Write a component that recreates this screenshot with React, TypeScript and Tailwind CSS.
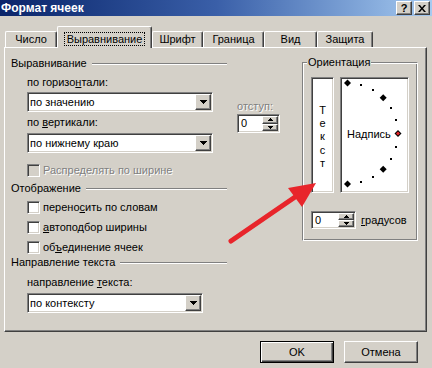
import type { ReactNode } from "react";

const RAISED =
  "border border-t-white border-l-white border-r-[#404040] border-b-[#404040] shadow-[inset_-1px_-1px_0_#808080]";
const SUNKEN =
  "border border-t-[#808080] border-l-[#808080] border-r-white border-b-white shadow-[inset_1px_1px_0_#404040,inset_-1px_-1px_0_#d4d0c8]";
const ETCHED =
  "border border-t-[#808080] border-l-[#808080] border-r-white border-b-white shadow-[inset_1px_1px_0_white,inset_-1px_-1px_0_#808080]";
const DISABLED = "text-[#808080] [text-shadow:1px_1px_0_#fff]";

const TABS = [
  { label: "Число", w: "w-[52px]" },
  { label: "Выравнивание", w: "w-[95px]", active: true },
  { label: "Шрифт", w: "w-[51px]" },
  { label: "Граница", w: "w-[61px]" },
  { label: "Вид", w: "w-[53px]" },
  { label: "Защита", w: "w-[56px]" },
];

export default function App() {
  return (
    <div className="relative w-[432px] h-[368px] overflow-hidden bg-[#d4d0c8] font-['Liberation_Sans',Arial,sans-serif] text-[11px] leading-[13px] text-black">
      <TitleBar />

      <div className="mt-[10px] h-[21px] pl-[5px] flex items-end">
        {TABS.map((t) =>
          t.active ? (
            <div
              key={t.label}
              className={`${t.w} relative z-10 -mb-[1px] h-[22px] bg-[#d4d0c8] border-t border-l border-t-white border-l-white border-r border-r-[#404040] shadow-[inset_-1px_0_0_#808080] rounded-t-[2px] flex justify-center pt-[5px]`}
            >
              <span className="h-[14px] px-[2px] border border-dotted border-black leading-[12px]">
                {t.label}
              </span>
            </div>
          ) : (
            <div
              key={t.label}
              className={`${t.w} mr-[0px] h-[16px] border-t border-l border-t-white border-l-white border-r border-r-[#404040] shadow-[inset_-1px_0_0_#808080] rounded-t-[2px] flex items-center justify-center`}
            >
              {t.label}
            </div>
          )
        )}
      </div>

      <div className="ml-[4px] w-[423px] h-[285px] border border-t-white border-l-white border-r-[#404040] border-b-[#404040] shadow-[inset_-1px_-1px_0_#808080] flex pl-[6px]">
        <LeftColumn />

        <div className="ml-[10px] w-[43px] pt-[52px] flex flex-col">
          <span className={DISABLED}>отступ:</span>
          <Spinner className="mt-[1px] w-[43px] h-[19px]" />
        </div>

        <Orientation />
      </div>

      <div className="mt-[9px] pr-[14px] flex justify-end gap-[10px]">
        <button
          type="button"
          className="w-[74px] h-[22px] bg-[#d4d0c8] border border-black shadow-[inset_1px_1px_0_white,inset_-1px_-1px_0_#404040,inset_-2px_-2px_0_#808080]"
        >
          OK
        </button>
        <button type="button" className={`${RAISED} w-[74px] h-[22px] bg-[#d4d0c8]`}>
          Отмена
        </button>
      </div>

      {/* red arrow drawn over the dialog */}
      <svg
        className="absolute left-0 top-0 pointer-events-none"
        width="432"
        height="368"
        viewBox="0 0 432 368"
      >
        <line x1="231" y1="241" x2="298" y2="195" stroke="#e8252b" strokeWidth="5" strokeLinecap="round" />
        <polygon points="316,183 288,188 302,207" fill="#e8252b" />
      </svg>
    </div>
  );
}

function TitleBar() {
  return (
    <div className="h-[16px] bg-linear-to-r from-[#0a246a] via-[#3a5fa8] to-[#a6caf0] flex items-center justify-between pr-[2px]">
      <span className="pl-[1px] text-white font-bold text-[12px]">Формат ячеек</span>
      <div className="flex gap-[2px]">
        <div className={`${RAISED} w-[16px] h-[14px] bg-[#d4d0c8] flex items-center justify-center font-bold text-[11px] leading-[10px]`}>
          ?
        </div>
        <div className={`${RAISED} w-[16px] h-[14px] bg-[#d4d0c8] flex items-center justify-center`}>
          <svg width="8" height="7" viewBox="0 0 8 7">
            <path d="M0 0h2l2 2.5L6 0h2L5 3.5 8 7H6L4 4.5 2 7H0l3-3.5z" fill="black" />
          </svg>
        </div>
      </div>
    </div>
  );
}

function LeftColumn() {
  return (
    <div className="w-[216px] pt-[9px] flex flex-col">
      <Heading title="Выравнивание" />
      <div className="pl-[16px] flex flex-col">
        <span className="mt-[6px]">
          по горизо<u>н</u>тали:
        </span>
        <Combo className="mt-[3px] w-[186px]" value="по значению" />
        <span className="mt-[4px]">
          по <u>в</u>ертикали:
        </span>
        <Combo className="mt-[4px] w-[186px]" value="по нижнему краю" />
        <Check className="mt-[11px]" disabled>
          Распределять по ширине
        </Check>
      </div>

      <div className="mt-[5px]">
        <Heading title="Отображение" />
      </div>
      <div className="pl-[16px] flex flex-col gap-[7px] mt-[6px]">
        <Check>
          перено<u>с</u>ить по словам
        </Check>
        <Check>
          <u>а</u>втоподбор ширины
        </Check>
        <Check>
          об<u>ъ</u>единение ячеек
        </Check>
      </div>

      <div className="mt-[2px]">
        <Heading title="Направление текста" />
      </div>
      <div className="pl-[16px] flex flex-col">
        <span className="mt-[7px]">
          направление <u>т</u>екста:
        </span>
        <Combo className="mt-[4px] w-[176px]" value="по контексту" />
      </div>
    </div>
  );
}

function Heading({ title }: { title: string }) {
  return (
    <div className="h-[13px] flex items-center">
      <span>{title}</span>
      <div className="ml-[5px] flex-1 h-[2px] border-t border-b border-t-[#808080] border-b-white" />
    </div>
  );
}

function DownTri() {
  return (
    <svg width="7" height="4" viewBox="0 0 7 4">
      <path d="M0 0h7v1H0zM1 1h5v1H1zM2 2h3v1H2zM3 3h1v1H3z" fill="black" />
    </svg>
  );
}

function Combo({ value, className }: { value: string; className: string }) {
  return (
    <div className={`${SUNKEN} ${className} h-[20px] bg-white p-[1px] flex items-center`}>
      <span className="flex-1 pl-[1px]">{value}</span>
      <div className={`${RAISED} w-[16px] h-[16px] bg-[#d4d0c8] flex items-center justify-center`}>
        <DownTri />
      </div>
    </div>
  );
}

function Spinner({ className }: { className: string }) {
  return (
    <div className={`${SUNKEN} ${className} bg-white p-[1px] flex`}>
      <span className="flex-1 pl-[2px] self-center">0</span>
      <div className="w-[16px] flex flex-col">
        <div className={`${RAISED} flex-1 bg-[#d4d0c8] flex items-center justify-center`}>
          <svg width="5" height="3" viewBox="0 0 5 3">
            <path d="M2 0h1v1H2zM1 1h3v1H1zM0 2h5v1H0z" fill="black" />
          </svg>
        </div>
        <div className={`${RAISED} flex-1 bg-[#d4d0c8] flex items-center justify-center`}>
          <svg width="5" height="3" viewBox="0 0 5 3">
            <path d="M0 0h5v1H0zM1 1h3v1H1zM2 2h1v1H2z" fill="black" />
          </svg>
        </div>
      </div>
    </div>
  );
}

function Check({
  children,
  disabled,
  className = "",
}: {
  children: ReactNode;
  disabled?: boolean;
  className?: string;
}) {
  return (
    <div className={`h-[13px] flex items-center gap-[3px] ${className}`}>
      <div className={`${SUNKEN} w-[13px] h-[13px] ${disabled ? "bg-[#d4d0c8]" : "bg-white"}`} />
      <span className={disabled ? DISABLED : ""}>{children}</span>
    </div>
  );
}

function Orientation() {
  const cx = 6.5;
  const cy = 55.5;
  const r = 50.5;
  const marks = [90, 75, 60, 45, 30, 15, 0, -15, -30, -45, -60, -75, -90].map((deg) => {
    const a = (deg * Math.PI) / 180;
    return { deg, x: cx + r * Math.cos(a), y: cy - r * Math.sin(a) };
  });

  return (
    <div className={`${ETCHED} relative ml-[22px] mt-[14px] w-[116px] h-[179px] pl-[8px] pt-[14px] flex flex-col`}>
      <span className="absolute left-[4px] -top-[7px] px-[1px] bg-[#d4d0c8]">Ориентация</span>

      <div className="flex">
        <div className={`${SUNKEN} w-[23px] h-[116px] bg-white pt-[4px] flex flex-col items-center justify-center leading-[13.3px]`}>
          <span>Т</span>
          <span>е</span>
          <span>к</span>
          <span>с</span>
          <span>т</span>
        </div>
        <div className={`${SUNKEN} ml-[6px] w-[69px] h-[116px] bg-white`}>
          <svg width="67" height="114" viewBox="0 0 67 114" className="block">
            {marks.map((m) =>
              m.deg % 45 === 0 ? (
                <g key={m.deg}>
                  <polygon
                    points={`${m.x},${m.y - 3.5} ${m.x + 3.5},${m.y} ${m.x},${m.y + 3.5} ${m.x - 3.5},${m.y}`}
                    fill="black"
                  />
                  {m.deg === 0 && (
                    <polygon
                      points={`${m.x},${m.y - 2} ${m.x + 2},${m.y} ${m.x},${m.y + 2} ${m.x - 2},${m.y}`}
                      fill="#e8252b"
                    />
                  )}
                </g>
              ) : (
                <rect key={m.deg} x={Math.round(m.x) - 1} y={Math.round(m.y) - 1} width="2" height="2" fill="black" />
              )
            )}
            <text x="6" y="60" fontSize="11" fontFamily="Liberation Sans, Arial, sans-serif" fill="black">
              Надпись
            </text>
          </svg>
        </div>
      </div>

      <div className="mt-[18px] flex items-center">
        <Spinner className="w-[45px] h-[18px]" />
        <span className="ml-[5px]">
          <u>г</u>радусов
        </span>
      </div>
    </div>
  );
}
